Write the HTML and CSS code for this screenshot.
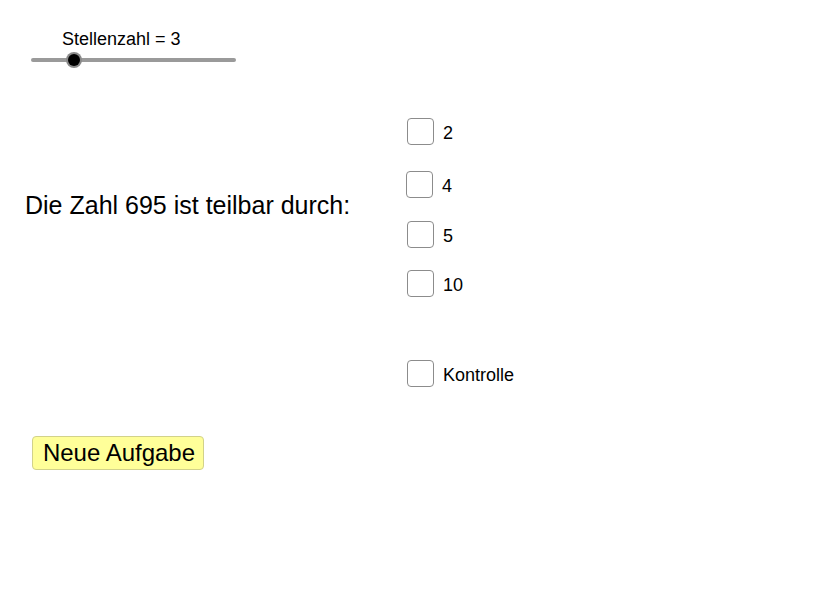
FILE: index.html
```html
<!DOCTYPE html>
<html lang="de">
<head>
<meta charset="utf-8">
<title>Teilbarkeit</title>
<link rel="stylesheet" href="styles.css">
</head>
<body>
<div class="applet">
  <div class="slider">
    <div class="slider-label">Stellenzahl = 3</div>
    <div class="slider-track">
      <span class="slider-knob"></span>
    </div>
  </div>

  <div class="main">
    <div class="question">Die Zahl 695 ist teilbar durch:</div>
    <div class="options">
      <label class="opt opt-1"><span class="box"></span><span class="opt-text">2</span></label>
      <label class="opt opt-2"><span class="box"></span><span class="opt-text">4</span></label>
      <label class="opt opt-3"><span class="box"></span><span class="opt-text">5</span></label>
      <label class="opt opt-4"><span class="box"></span><span class="opt-text">10</span></label>
      <label class="opt opt-check"><span class="box"></span><span class="opt-text">Kontrolle</span></label>
    </div>
  </div>

  <div class="actions">
    <button class="btn-new">Neue Aufgabe</button>
  </div>
</div>
</body>
</html>
```

FILE: styles.css
```css
html, body {
  margin: 0;
  padding: 0;
  background: #ffffff;
}

.applet {
  width: 837px;
  height: 599px;
  font-family: "Liberation Sans", Arial, sans-serif;
  color: #000;
}

.slider {
  padding: 29px 0 0 31px;
  width: 205px;
}

.slider-label {
  font-size: 18px;
  line-height: 20px;
  margin-left: 31px;
}

.slider-track {
  position: relative;
  height: 4px;
  margin-top: 9px;
  background: #9a9a9a;
  border-radius: 2px;
}

.slider-knob {
  position: absolute;
  left: 37px;
  top: -4px;
  width: 12px;
  height: 12px;
  border-radius: 50%;
  background: #000;
  box-shadow: 0 0 0 2px #8a8a8a;
}

.main {
  display: flex;
  margin-top: 56px;
}

.question {
  width: 382px;
  padding-left: 25px;
  margin-top: 74px;
  font-size: 25px;
  line-height: 26px;
  white-space: nowrap;
}

.options {
  display: flex;
  flex-direction: column;
}

.opt {
  display: flex;
  align-items: center;
  height: 27px;
  font-size: 18px;
}

.opt-2 { margin-top: 26px; margin-left: -1px; }
.opt-3 { margin-top: 23px; }
.opt-4 { margin-top: 22px; }
.opt-check { margin-top: 63px; }

.box {
  box-sizing: border-box;
  width: 27px;
  height: 27px;
  border: 1.5px solid #8c8c8c;
  border-radius: 4px;
  background: #fff;
}

.opt-text {
  margin-left: 9px;
  padding-top: 3px;
}

.actions {
  margin-top: 49px;
  padding-left: 32px;
}

.btn-new {
  box-sizing: border-box;
  width: 172px;
  height: 34px;
  padding: 0 0 0 2px;
  font-family: "Liberation Sans", Arial, sans-serif;
  font-size: 24px;
  color: #000;
  background: #ffff99;
  border: 1px solid #d2d28a;
  border-radius: 4px;
}
```
